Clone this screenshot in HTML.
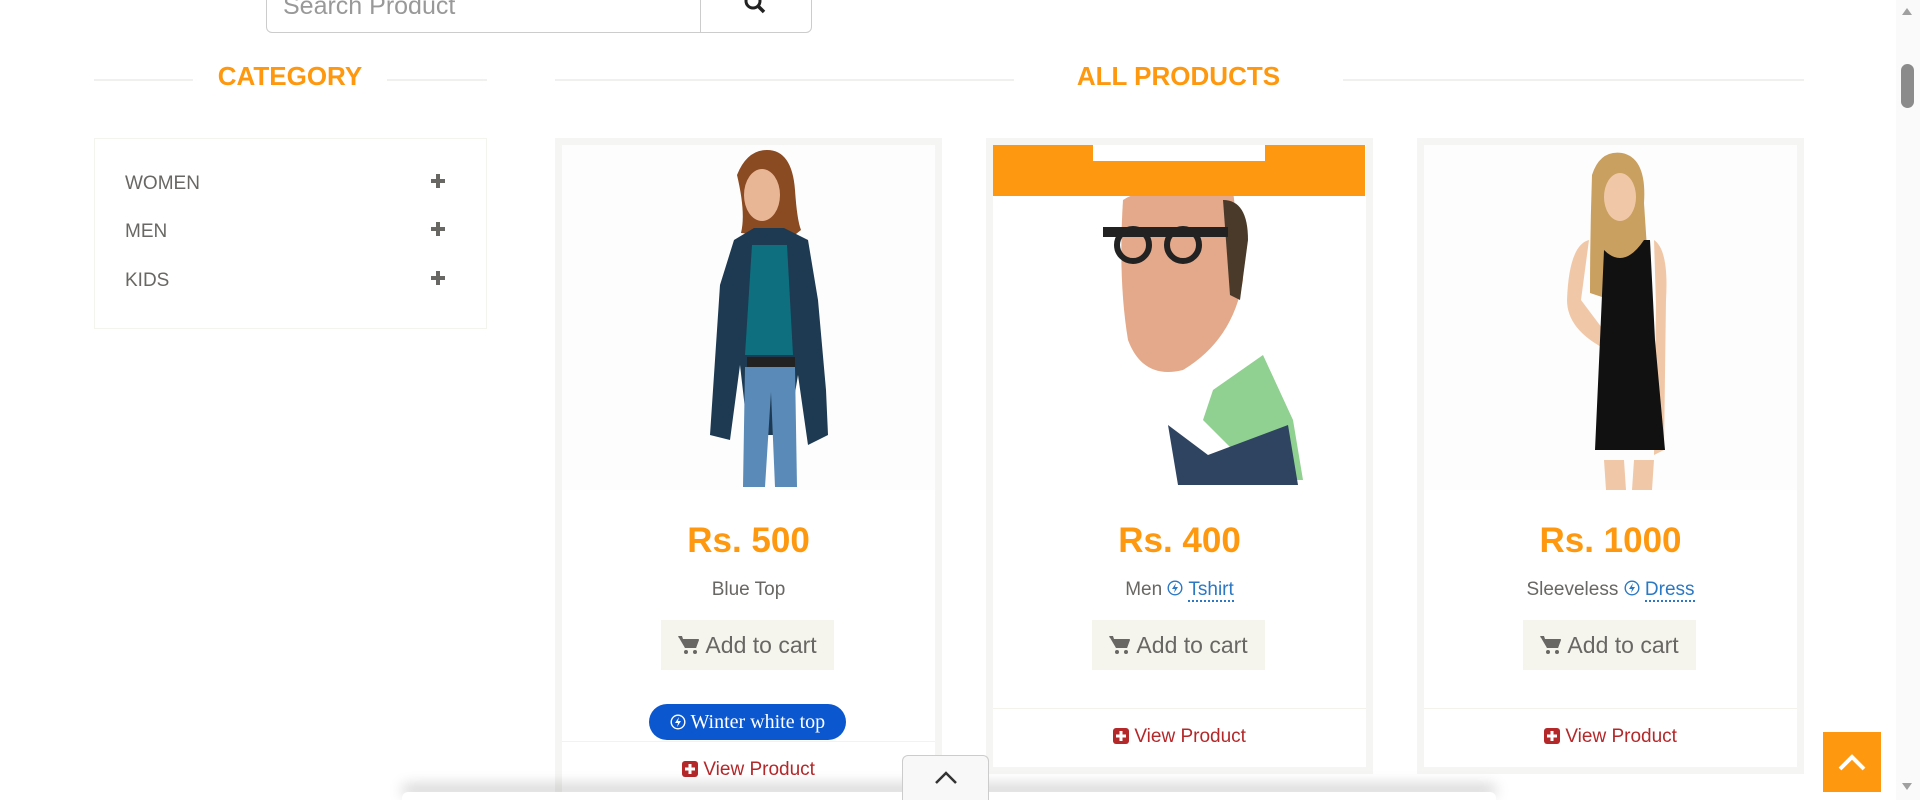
<!DOCTYPE html>
<html style="width:1920px;height:800px;overflow:hidden"><head><meta charset="utf-8"><style>
*{box-sizing:border-box;margin:0;padding:0}
body{width:1920px;height:800px;overflow:hidden;background:#fff;font-family:"Liberation Sans",Arial,sans-serif;position:relative}
.a{position:absolute}
.title{color:#FE980F;font-weight:bold;font-size:26px;text-align:center}
.line{height:2px;background:#f0f0ee}
.cat{left:94px;top:138px;width:393px;height:191px;border:1px solid #f4f4ee}
.ci{left:125px;font-size:19px;color:#696763}
.plus{left:431px;width:14px;height:14px}
.card{width:387px;top:138px;background:#f5f5f3;padding:7px}
.inner{background:#fff;position:relative;height:100%;overflow:hidden}
.price{width:100%;text-align:center;color:#FE980F;font-weight:bold;font-size:35px}
.name{width:100%;text-align:center;font-size:19px;color:#696763}
.btn{left:99px;width:173px;height:50px;background:#F5F5ED;color:#696763;font-size:23px;text-align:center;line-height:50px}
.sep{left:0;width:100%;height:1px;background:#f3f3ec}
.vp{width:100%;text-align:center;color:#B4282A;font-size:19px}
.lnk{color:#2b78c5;border-bottom:2px dotted #2b78c5}
</style></head><body>
<svg width="0" height="0" style="position:absolute"><defs>
<g id="pl"><rect x="5" y="0" width="4" height="14" fill="#696763"/><rect x="0" y="5" width="14" height="4" fill="#696763"/></g>
<g id="cart"><path d="M0 2h4l3 11h11l3-8H6" fill="#696763"/><path d="M0 1h4l1 3h16l-3 9H7z" fill="#696763"/><circle cx="8" cy="17" r="2" fill="#696763"/><circle cx="17" cy="17" r="2" fill="#696763"/></g>
<g id="vpi"><rect width="16" height="16" rx="3" fill="#B4282A"/><rect x="6.5" y="3" width="3" height="10" fill="#fff"/><rect x="3" y="6.5" width="10" height="3" fill="#fff"/></g>
<g id="bolt"><circle cx="8" cy="8" r="6.8" fill="none" stroke="currentColor" stroke-width="1.4"/><path d="M9 3L5 9h3l-1 4l4-6H8z" fill="currentColor"/></g>
</defs></svg>
<!-- search -->
<div class="a" style="left:266px;top:-20px;width:546px;height:53px;border:1px solid #ccc;border-radius:0 0 6px 6px;"></div>
<div class="a" style="left:700px;top:-20px;width:1px;height:53px;background:#ccc"></div>
<div class="a" style="left:283px;top:-8px;font-size:25px;color:#999">Search Product</div>
<svg class="a" style="left:743px;top:-6px" width="24" height="22" viewBox="0 0 24 22"><circle cx="10" cy="7" r="7" fill="none" stroke="#222" stroke-width="3"/><path d="M15 12l6 6" stroke="#222" stroke-width="3.5"/></svg>

<div class="a line" style="left:94px;top:79px;width:99px"></div>
<div class="a line" style="left:387px;top:79px;width:100px"></div>
<div class="a title" style="left:193px;width:194px;top:61px">CATEGORY</div>
<div class="a line" style="left:555px;top:79px;width:459px"></div>
<div class="a line" style="left:1343px;top:79px;width:461px"></div>
<div class="a title" style="left:1014px;width:329px;top:61px">ALL PRODUCTS</div>

<div class="a cat"></div>
<div class="a ci" style="top:173px">WOMEN</div><svg class="a plus" style="top:174px"><use href="#pl"/></svg>
<div class="a ci" style="top:221px">MEN</div><svg class="a plus" style="top:222px"><use href="#pl"/></svg>
<div class="a ci" style="top:270px">KIDS</div><svg class="a plus" style="top:271px"><use href="#pl"/></svg>

<!-- card 1 -->
<div class="a card" style="left:555px;height:662px"><div class="inner">
<svg class="a" style="left:0;top:0" width="373" height="345" viewBox="0 0 373 345">
<rect width="373" height="345" fill="#fdfdfd"/>
<path d="M175 30q10-25 30-25q25 0 28 40q2 30 6 40l-10 8l-50-5q5-20 -4-58z" fill="#8a4a22"/>
<ellipse cx="200" cy="50" rx="18" ry="26" fill="#e8b595"/>
<path d="M172 95l20-12l30 0l24 12l10 60l8 90l2 45l-20 10l-10-70l-10 60h-40l-8-70l-10 75l-20-5l4-60l6-90z" fill="#1d3a52"/>
<path d="M190 100l35 0l6 110h-48z" fill="#0e6f7f"/>
<rect x="185" y="212" width="48" height="10" fill="#222"/>
<path d="M183 222h50l2 120h-22l-4-95l-6 95h-22z" fill="#5a8ab8"/>
</svg>
<div class="a price" style="top:376px">Rs. 500</div>
<div class="a name" style="top:434px">Blue Top</div>
<div class="a btn" style="top:475px"><svg width="22" height="20" style="vertical-align:-2px"><use href="#cart"/></svg> Add to cart</div>
<div class="a" style="left:87px;top:559px;width:197px;height:36px;border-radius:18px;background:#0b57d0;color:#fff;font-family:'Liberation Serif',serif;font-size:20px;text-align:center;line-height:36px"><svg width="16" height="16" style="vertical-align:-2px;color:#fff"><use href="#bolt"/></svg> Winter white top</div>
<div class="a sep" style="top:596px"></div>
<div class="a vp" style="top:614px"><svg width="16" height="16" style="vertical-align:-2px"><use href="#vpi"/></svg> View Product</div>
</div></div>

<!-- card 2 -->
<div class="a card" style="left:986px;height:636px"><div class="inner">
<svg class="a" style="left:0;top:0" width="372" height="345" viewBox="0 0 372 345">
<rect width="372" height="345" fill="#fff"/>
<path d="M130 55q30-20 110-10l10 90q-10 60-60 90q-40 10-55-30q-10-60 -5-140z" fill="#e3a98a"/>
<path d="M230 55q25 0 25 40l-8 60l-10-5z" fill="#4a3a2a"/>
<rect x="110" y="82" width="125" height="10" fill="#222"/><circle cx="140" cy="100" r="16" fill="none" stroke="#222" stroke-width="6"/><circle cx="190" cy="100" r="16" fill="none" stroke="#222" stroke-width="6"/>
<path d="M150 265q30-20 70-50q30 20 60 70l20 60h-190z" fill="#fff"/>
<path d="M220 245l50-35l30 65l10 60h-40l-60-60z" fill="#90d090"/>
<path d="M175 280l40 30l80-30l10 60h-120z" fill="#2e4460"/>
</svg>
<div class="a" style="left:0;top:0;width:372px;height:51px;background:#FE9811"></div>
<div class="a" style="left:100px;top:0;width:172px;height:16px;background:#fff"></div>
<div class="a price" style="top:376px">Rs. 400</div>
<div class="a name" style="top:434px">Men <svg width="16" height="16" style="vertical-align:-1px;color:#2b78c5"><use href="#bolt"/></svg> <span class="lnk">Tshirt</span></div>
<div class="a btn" style="top:475px"><svg width="22" height="20" style="vertical-align:-2px"><use href="#cart"/></svg> Add to cart</div>
<div class="a sep" style="top:563px"></div>
<div class="a vp" style="top:581px"><svg width="16" height="16" style="vertical-align:-2px"><use href="#vpi"/></svg> View Product</div>
</div></div>

<!-- card 3 -->
<div class="a card" style="left:1417px;height:636px"><div class="inner">
<svg class="a" style="left:0;top:0" width="373" height="345" viewBox="0 0 373 345">
<rect width="373" height="345" fill="#fdfdfd"/>
<path d="M168 30q8-25 30-22q25 5 22 50l6 90l-30 10l-30-10q0-60 2-118z" fill="#c9a060"/>
<ellipse cx="196" cy="52" rx="16" ry="24" fill="#f0c8a8"/>
<path d="M165 95q-20 5-22 60q0 30 40 50l4-10l-30-40z M230 95q15 10 12 60l-2 150l-10 5l2-150z" fill="#f0c8a8"/>
<path d="M180 105q20 20 40-10l6 0l5 100l10 110l-70 0l5-110z" fill="#111"/>
<path d="M180 315h20l2 30h-20z M210 315h20l-2 30h-20z" fill="#f0c8a8"/>
</svg>
<div class="a price" style="top:376px">Rs. 1000</div>
<div class="a name" style="top:434px">Sleeveless <svg width="16" height="16" style="vertical-align:-1px;color:#2b78c5"><use href="#bolt"/></svg> <span class="lnk">Dress</span></div>
<div class="a btn" style="top:475px"><svg width="22" height="20" style="vertical-align:-2px"><use href="#cart"/></svg> Add to cart</div>
<div class="a sep" style="top:563px"></div>
<div class="a vp" style="top:581px"><svg width="16" height="16" style="vertical-align:-2px"><use href="#vpi"/></svg> View Product</div>
</div></div>

<!-- bottom panel -->
<div class="a" style="left:402px;top:792px;width:1094px;height:8px;background:#fff;box-shadow:0 -6px 14px rgba(0,0,0,.25);border-radius:6px 6px 0 0"></div>
<div class="a" style="left:902px;top:755px;width:87px;height:45px;background:#f8f8f8;border:1px solid #ccc;border-bottom:none;border-radius:6px 6px 0 0"></div>
<svg class="a" style="left:934px;top:770px" width="24" height="16"><path d="M2 13l10-10l10 10" fill="none" stroke="#333" stroke-width="2.5"/></svg>

<div class="a" style="left:1823px;top:732px;width:58px;height:60px;background:#FE980F"></div>
<svg class="a" style="left:1837px;top:752px" width="30" height="20"><path d="M3 17l12-12l12 12" fill="none" stroke="#fff" stroke-width="4"/></svg>

<!-- scrollbar -->
<div class="a" style="left:1896px;top:0;width:24px;height:800px;background:#fafafa"></div>
<svg class="a" style="left:1900px;top:6px" width="14" height="10"><path d="M2 9l5-7l5 7z" fill="#a0a0a0"/></svg>
<div class="a" style="left:1901px;top:64px;width:13px;height:44px;background:#8b8b8b;border-radius:7px"></div>
<svg class="a" style="left:1900px;top:782px" width="14" height="10"><path d="M2 1l5 7l5-7z" fill="#a0a0a0"/></svg>
</body></html>
